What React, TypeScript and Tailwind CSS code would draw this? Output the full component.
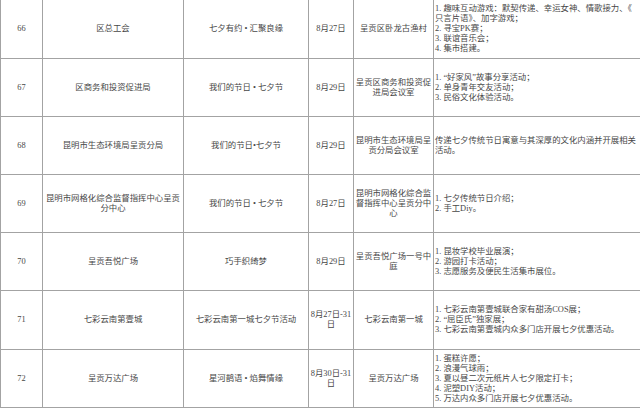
import React from "react";

type Row = {
  no: string;
  org: string;
  act: string;
  date: React.ReactNode;
  place: string;
  content: string[];
  h: string;
};

const rows: Row[] = [
  {
    no: "66",
    org: "区总工会",
    act: "七夕有约 • 汇聚良缘",
    date: "8月27日",
    place: "呈贡区卧龙古渔村",
    content: [
      "1. 趣味互动游戏：默契传递、幸运女神、情歌接力、《",
      "只言片语》、加字游戏；",
      "2. 寻宝PK赛；",
      "3. 联谊音乐会；",
      "4. 集市搭建。",
    ],
    h: "h-[59px]",
  },
  {
    no: "67",
    org: "区商务和投资促进局",
    act: "我们的节日 • 七夕节",
    date: "8月29日",
    place: "呈贡区商务和投资促进局会议室",
    content: ["1. “好家风”故事分享活动；", "2. 单身青年交友活动；", "3. 民俗文化体验活动。"],
    h: "h-[58px]",
  },
  {
    no: "68",
    org: "昆明市生态环境局呈贡分局",
    act: "我们的节日•七夕节",
    date: "8月29日",
    place: "昆明市生态环境局呈贡分局会议室",
    content: ["传递七夕传统节日寓意与其深厚的文化内涵并开展相关", "活动。"],
    h: "h-[58px]",
  },
  {
    no: "69",
    org: "昆明市网格化综合监督指挥中心呈贡分中心",
    act: "我们的节日 • 七夕节",
    date: "8月27日",
    place: "昆明市网格化综合监督指挥中心呈贡分中心",
    content: ["1. 七夕传统节日介绍；", "2. 手工Diy。"],
    h: "h-[58px]",
  },
  {
    no: "70",
    org: "呈贡吾悦广场",
    act: "巧手织绮梦",
    date: "8月29日",
    place: "呈贡吾悦广场一号中庭",
    content: ["1. 昆妆学校毕业展演；", "2. 游园打卡活动；", "3. 志愿服务及便民生活集市展位。"],
    h: "h-[58px]",
  },
  {
    no: "71",
    org: "七彩云南第壹城",
    act: "七彩云南第一城七夕节活动",
    date: (
      <>
        8月27日-31
        <br />日
      </>
    ),
    place: "七彩云南第一城",
    content: [
      "1. 七彩云南第壹城联合家有甜汤COS展；",
      "2. “屈臣氏”独家展；",
      "3. 七彩云南第壹城内众多门店开展七夕优惠活动。",
    ],
    h: "h-[59px]",
  },
  {
    no: "72",
    org: "呈贡万达广场",
    act: "星河鹊语 • 焰舞情缘",
    date: (
      <>
        8月30日-31
        <br />日
      </>
    ),
    place: "呈贡万达广场",
    content: [
      "1. 蛋糕许愿；",
      "2. 浪漫气球雨；",
      "3. 夏以昼二次元纸片人七夕限定打卡；",
      "4. 泥塑DIY活动；",
      "5. 万达内众多门店开展七夕优惠活动。",
    ],
    h: "h-[58px]",
  },
];

const cell = "flex items-center justify-center text-center border-r border-b border-[#a3a3a3] px-[1px]";

export default function App() {
  return (
    <div
      className="w-[640px] h-[408px] bg-white overflow-hidden text-[#474747] text-[8.4px] leading-[10px]"
      style={{ fontFamily: '"Liberation Serif", "Noto Sans CJK SC", serif' }}
    >
      {rows.map((r) => (
        <div
          key={r.no}
          className={`grid grid-cols-[43px_141px_125px_45px_80px_206px] ${r.h}`}
        >
          <div className={`${cell} border-l`}>{r.no}</div>
          <div className={cell}>{r.org}</div>
          <div className={cell}>{r.act}</div>
          <div className={cell}>
            <span>{r.date}</span>
          </div>
          <div className={cell}>{r.place}</div>
          <div className="flex flex-col justify-center border-b border-[#a3a3a3] pl-[1px] overflow-hidden">
            {r.content.map((c, i) => (
              <div key={i} className="whitespace-nowrap">
                {c}
              </div>
            ))}
          </div>
        </div>
      ))}
    </div>
  );
}
